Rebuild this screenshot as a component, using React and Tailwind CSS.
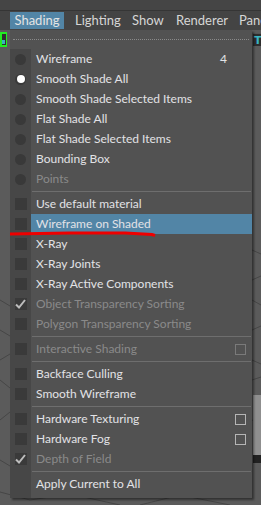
import React from 'react';

const items = [
  { label: 'Wireframe', icon: 'radio', right: '4' },
  { label: 'Smooth Shade All', icon: 'radio-on' },
  { label: 'Smooth Shade Selected Items', icon: 'radio' },
  { label: 'Flat Shade All', icon: 'radio' },
  { label: 'Flat Shade Selected Items', icon: 'radio' },
  { label: 'Bounding Box', icon: 'radio' },
  { label: 'Points', icon: 'radio', disabled: true },
  { sep: true },
  { label: 'Use default material', icon: 'box' },
  { label: 'Wireframe on Shaded', icon: 'box', active: true },
  { label: 'X-Ray', icon: 'box' },
  { label: 'X-Ray Joints', icon: 'box' },
  { label: 'X-Ray Active Components', icon: 'box' },
  { label: 'Object Transparency Sorting', icon: 'check', disabled: true },
  { label: 'Polygon Transparency Sorting', icon: 'box', disabled: true },
  { sep: true },
  { label: 'Interactive Shading', icon: 'box', disabled: true, option: true },
  { sep: true },
  { label: 'Backface Culling', icon: 'box' },
  { label: 'Smooth Wireframe', icon: 'box' },
  { sep: true },
  { label: 'Hardware Texturing', icon: 'box', option: true },
  { label: 'Hardware Fog', icon: 'box', option: true },
  { label: 'Depth of Field', icon: 'check', disabled: true },
  { sep: true },
  { label: 'Apply Current to All' },
];

const Icon = ({ type }) => {
  if (type === 'radio' || type === 'radio-on') {
    return (
      <div className="w-[11px] h-[11px] rounded-full bg-[#393939] flex items-center justify-center">
        {type === 'radio-on' && <div className="w-[8px] h-[8px] rounded-full bg-white" />}
      </div>
    );
  }
  if (type === 'box') return <div className="w-[12px] h-[12px] bg-[#3a3a3a]" />;
  if (type === 'check') {
    return (
      <div className="w-[12px] h-[12px] bg-[#3a3a3a] flex items-center justify-center">
        <svg width="11" height="10" viewBox="0 0 11 10">
          <path d="M1 5.5 L4 8.5 L10 1" stroke="#bdbdbd" strokeWidth="2" fill="none" />
        </svg>
      </div>
    );
  }
  return null;
};

const Row = ({ item }) => (
  <div className={`flex h-[20px] items-center ${item.active ? 'bg-[#5285a6]' : ''}`}>
    <div className="w-[21px] h-full flex items-center justify-center bg-[#474747]">
      <Icon type={item.icon} />
    </div>
    <span className={`ml-[5px] flex-1 text-[12px] ${item.disabled ? 'text-[#8a8a8a]' : 'text-[#e2e2e6]'}`}>
      {item.label}
    </span>
    {item.right && <span className="text-[#e2e2e6] text-[12px] mr-[25px]">{item.right}</span>}
    {item.option && (
      <div className={`w-[11px] h-[11px] border mr-[6px] ${item.disabled ? 'border-[#7a7a7a]' : 'border-[#b5b5b5]'}`} />
    )}
  </div>
);

export default function App() {
  return (
    <div className="relative w-[261px] h-[505px] overflow-hidden bg-[#5b5b5b]" style={{ fontFamily: 'Lato, sans-serif' }}>
      {/* top strip */}
      <div className="h-[11px] bg-[#454545] border-b border-[#353535]" />
      {/* menubar */}
      <div className="h-[19px] bg-[#444444] flex items-stretch text-[13px] text-[#d6d6d6] overflow-hidden whitespace-nowrap">
        <div className="w-[10px] shrink-0" />
        <div className="w-[54px] shrink-0 bg-[#5285a6] flex items-center justify-center my-[1px] text-[#e4e4e4]">Shading</div>
        <div className="w-[57px] shrink-0 pl-[11px] flex items-center">Lighting</div>
        <div className="w-[44px] shrink-0 pl-[11px] flex items-center">Show</div>
        <div className="w-[63px] shrink-0 pl-[11px] flex items-center">Renderer</div>
        <div className="shrink-0 pl-[11px] flex items-center">Panel</div>
      </div>

      {/* viewport wire grid */}
      <svg className="absolute left-0 top-[30px]" width="261" height="475" viewBox="0 30 261 475">
        <g stroke="#464646" strokeWidth="1" fill="none">
          <path d="M0 300 L10 306" />
          <path d="M0 330 L10 336" />
          <path d="M0 360 L10 354" />
          <path d="M0 380 L10 388" />
          <path d="M0 420 L10 412" />
          <path d="M0 460 L10 466" />
          <path d="M0 492 L30 500 L70 494 L120 505" />
          <path d="M140 505 L180 495 L230 505" />
          <path d="M252 250 L261 254" />
          <path d="M252 280 L261 276" />
          <path d="M252 300 L261 305" />
          <path d="M252 330 L261 326" />
          <path d="M252 360 L261 364" />
          <path d="M252 380 L261 377" />
          <path d="M252 420 L261 424" />
        </g>
        <rect x="253" y="395" width="8" height="60" fill="#8f8f8f" />
        <rect x="253" y="455" width="8" height="8" fill="#222" />
      </svg>

      {/* left lock badge */}
      <div className="absolute left-0 top-[32px] w-[7px] h-[15px] bg-[#22ee22] flex items-center justify-center">
        <div className="w-[4px] h-[11px] bg-[#2f2f2f] flex items-end justify-center">
          <div className="w-[3px] h-[4px] bg-[#3ab0c0] mb-[1px]" />
        </div>
      </div>
      {/* right toolbar */}
      <div className="absolute left-[253px] top-[33px] w-[8px] h-[13px] overflow-hidden bg-[#2e2e2e] border-t border-[#555] text-[#38b6c4] text-[11px] font-bold leading-[13px] pl-[1px]" style={{ fontFamily: '"DejaVu Sans", sans-serif' }}>
        T
      </div>

      {/* dropdown menu */}
      <div className="absolute left-[10px] top-[30px] w-[242px] bg-[#525252] shadow-[2px_2px_2px_rgba(0,0,0,0.45)]">
        <div className="h-[19px] flex items-center px-[3px]">
          <div className="w-full border-t border-dotted border-[#8a8a8a]" />
        </div>
        {items.map((item, i) =>
          item.sep ? (
            <div key={i} className="flex h-[5px]">
              <div className="w-[21px] bg-[#474747]" />
              <div className="flex-1 flex items-center pl-[1px] pr-[1px]">
                <div className="w-full h-px bg-[#6e6e6e]" />
              </div>
            </div>
          ) : (
            <Row key={i} item={item} />
          )
        )}
        <div className="flex h-[4px]">
          <div className="w-[21px] bg-[#474747]" />
        </div>
      </div>

      {/* red annotation */}
      <svg className="absolute left-0 top-[228px]" width="170" height="10" viewBox="0 228 170 10">
        <path d="M10 234 L70 233 L125 233 L152 234.5 L155 235.5" stroke="#ee0000" strokeWidth="3" fill="none" />
      </svg>
    </div>
  );
}
